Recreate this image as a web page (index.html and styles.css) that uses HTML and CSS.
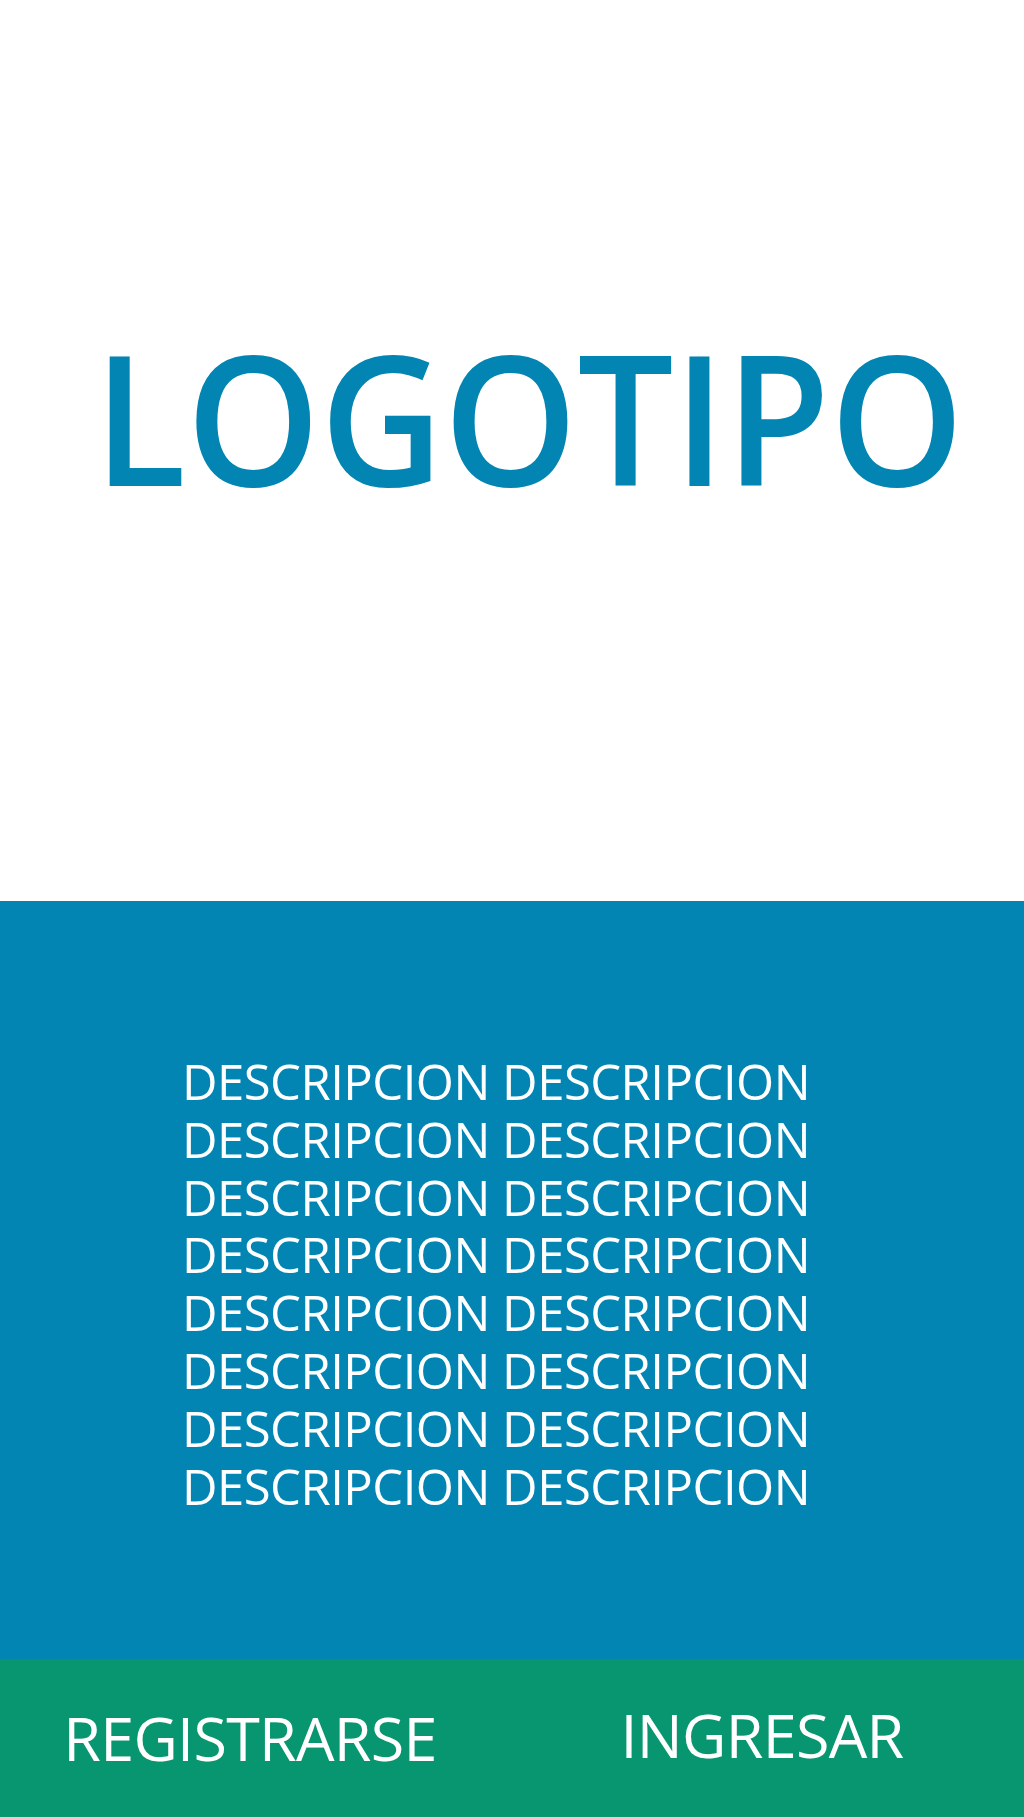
FILE: index.html
```html
<!DOCTYPE html>
<html lang="es">
<head>
<meta charset="utf-8">
<title>Logotipo</title>
<link rel="stylesheet" href="styles.css">
</head>
<body>
<header class="hero">
  <h1 class="logo">LOGOTIPO</h1>
</header>
<section class="about">
  <p class="desc">DESCRIPCION DESCRIPCION<br>DESCRIPCION DESCRIPCION<br>DESCRIPCION DESCRIPCION<br>DESCRIPCION DESCRIPCION<br>DESCRIPCION DESCRIPCION<br>DESCRIPCION DESCRIPCION<br>DESCRIPCION DESCRIPCION<br>DESCRIPCION DESCRIPCION</p>
</section>
<nav class="actions">
  <a class="btn btn-register" href="#">REGISTRARSE</a>
  <a class="btn btn-login" href="#">INGRESAR</a>
</nav>
</body>
</html>
```
FILE: styles.css
```css
* { box-sizing: border-box; }
html, body { margin: 0; padding: 0; }
body {
  font-family: "Open Sans", "Noto Sans", sans-serif;
  background: #ffffff;
  width: 1024px;
}
.hero {
  height: 901px;
  display: flex;
  justify-content: center;
  align-items: center;
}
.logo {
  margin: 0;
  font-weight: 600;
  font-size: 181px;
  color: #0285b3;
  line-height: 1;
  padding-left: 36px;
  padding-bottom: 68px;
  transform: scaleX(0.94);
}
.about {
  height: 758px;
  background: #0285b3;
  display: flex;
  justify-content: center;
  padding-top: 152px;
}
.desc {
  margin: 0;
  color: #ffffff;
  font-size: 49px;
  line-height: 57.8px;
  text-align: center;
  letter-spacing: -0.5px;
  padding-right: 32px;
}
.actions {
  height: 158px;
  background: #079670;
  display: grid;
  grid-template-columns: 1fr 1fr;
  align-items: center;
}
.btn {
  color: #ffffff;
  text-decoration: none;
  font-size: 61px;
  text-align: center;
  letter-spacing: -0.7px;
}
.btn-register { padding-bottom: 2px; padding-right: 12px; }
.btn-login { padding-bottom: 8px; padding-right: 12px; }
```
